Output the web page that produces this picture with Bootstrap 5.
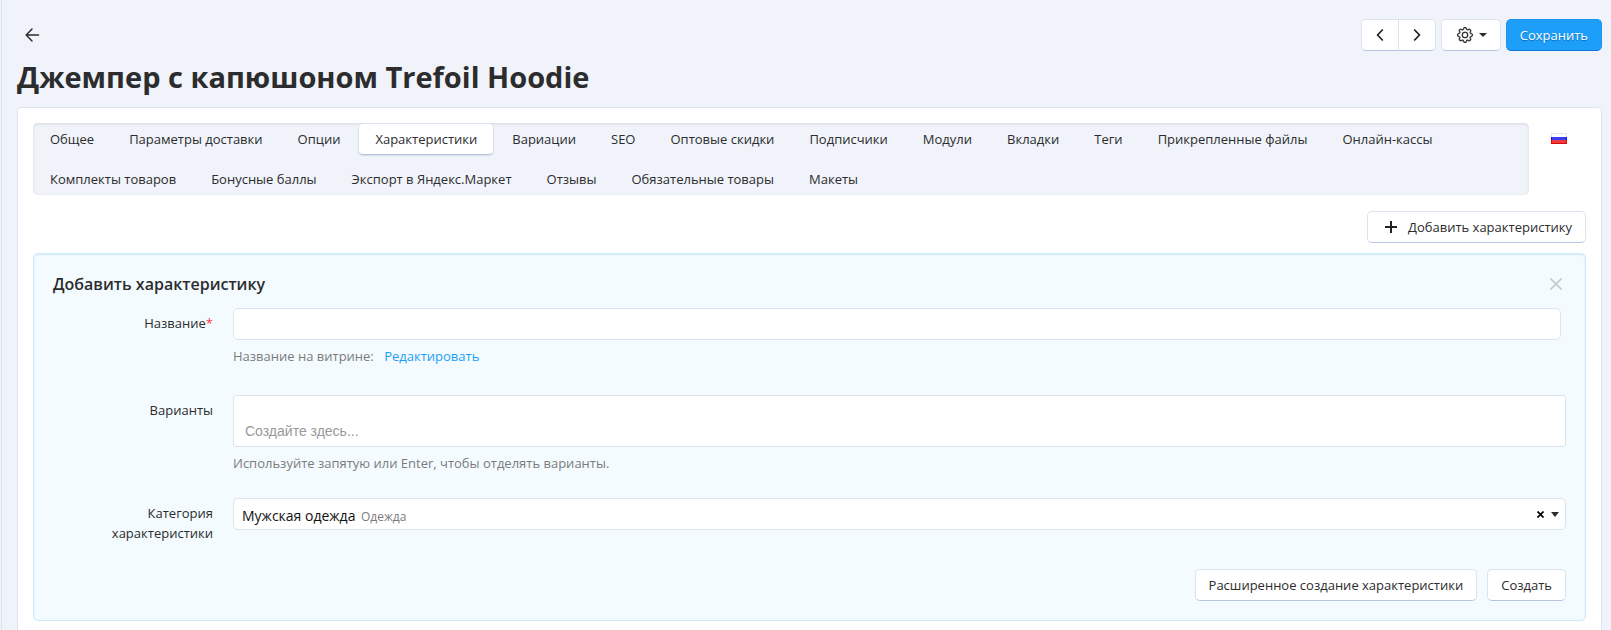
<!DOCTYPE html>
<html lang="ru">
<head>
<meta charset="utf-8">
<meta name="viewport" content="width=device-width, initial-scale=1">
<title>Джемпер с капюшоном Trefoil Hoodie</title>
<link href="https://cdn.jsdelivr.net/npm/bootstrap@5.3.0/dist/css/bootstrap.min.css" rel="stylesheet">
<style>
  :root { --line: #dbe3f0; --line-deep: #b4c3de; --ink: #2c2c2e; --page: #f0f3f9; --accent: #1d9ff9; }
  body { font-family: "Open Sans", "Noto Sans", sans-serif; font-size: 13px; line-height: 20px; color: var(--ink); background: var(--page); }
  .page-wrap { margin-left: 1px; border-left: 1px solid #dbe5f1; padding: 19px 9px 0 15px; }
  .page-title { font-size: 29px; line-height: 36px; font-weight: 700; margin: 8px 0 12px; }
  .toolbar { gap: 5px; }
  .btn { --bs-btn-font-size: 13px; --bs-btn-line-height: 20px; --bs-btn-padding-y: 5px; --bs-btn-padding-x: 13px; --bs-btn-border-radius: 5px; white-space: nowrap; }
  .btn-plain { --bs-btn-bg: #fff; --bs-btn-color: var(--ink); --bs-btn-border-color: var(--line); --bs-btn-hover-bg: #f7f9fc; --bs-btn-hover-border-color: var(--line-deep); border-bottom-color: var(--line-deep); }
  .btn-save { --bs-btn-bg: var(--accent); --bs-btn-color: #fff; --bs-btn-border-color: #1d93f0; --bs-btn-hover-bg: #1390ea; --bs-btn-hover-color: #fff; border-bottom-color: #0e76d8; text-shadow: 0 1px 1px #0b6cb8; }
  .btn-nav { --bs-btn-padding-x: 10px; width: 38px; }
  .btn-gear { gap: 5px; padding-left: 15px; padding-right: 12px; }
  .btn svg, .back svg { display: block; }
  .back { padding-left: 7px; }
  .sheet { background: #fff; border: 1px solid var(--line); border-bottom: 0; border-radius: 5px 5px 0 0; padding: 15px 15px 8px; min-height: calc(100vh - 107px); }
  .tabs { background: var(--page); border-radius: 5px; box-shadow: inset 0 1px 3px #d3d9de; gap: 8px 1px; }
  .tabs .nav-link { color: var(--ink); padding: 5px 16px; border: 1px solid transparent; border-radius: 5px; }
  .tabs .nav-link.active { color: var(--ink); background: #fff; border-color: var(--line); border-bottom-color: var(--line-deep); box-shadow: 0 1px 1px #d5deed; }
  .lang { width: 57px; padding: 10px 14px 0 22px; }
  .add-row { margin: 16px 0 10px; }
  .plus { margin-right: 7px; }
  .panel { background: #f3fbff; border: 1px solid #cdeafc; border-radius: 5px; box-shadow: inset 0 1px 2px #d4e9f6; padding: 18px 19px 19px; }
  .panel h2 { font-size: 16px; line-height: 24px; font-weight: 600; margin: 0; }
  .close-x { width: 12px; height: 12px; margin-right: 4px; }
  .field { display: grid; grid-template-columns: 160px minmax(0, 1fr); column-gap: 20px; }
  .field > label { text-align: right; padding-top: 5px; }
  .req { color: #f8384c; }
  .hint { color: #7b7b7d; margin-top: 6px; }
  .hint a { color: var(--accent); text-decoration: none; margin-left: 7px; }
  .form-control { font-size: 13px; line-height: 20px; border-color: var(--line); border-radius: 5px; padding: 5px 11px; }
  .name-row { padding-right: 5px; }
  .variants-row { margin-top: 29px; }
  .category-row { margin-top: 25px; }
  .actions { gap: 10px; margin-top: 26px; }
  textarea.form-control { font-family: "Liberation Sans", Arial, sans-serif; font-size: 14px; height: 52px; padding: 25px 11px 5px; border-radius: 3px; resize: none; overflow: hidden; display: block; }
  textarea.form-control::placeholder { color: #999; }
  .picker { background: #fff; border: 1px solid var(--line); border-radius: 5px; height: 32px; padding: 0 6px 0 8px; }
  .picker select { appearance: none; border: 0; background: none; color: #111; padding: 0; margin-right: 5px; font: inherit; font-size: 14px; }
  .picker small { font-size: 12px; color: #7b7b7d; }
  .picker-text { padding-top: 5px; }
  .picker-clear { margin-right: 7px; }
  .picker svg { display: block; }
</style>
</head>
<body>
<main class="page-wrap">
  <header>
    <div class="d-flex justify-content-between align-items-center">
      <a href="#" class="back" aria-label="Назад">
        <svg width="16" height="16" viewBox="0 0 16 16" fill="none" stroke="#2c2c2e" stroke-width="1.5" stroke-linecap="round" stroke-linejoin="round"><path d="M14.500 8H2.500M8 2L2.200 8 8 14"/></svg>
      </a>
      <div class="d-flex toolbar">
        <div class="btn-group">
          <button type="button" class="btn btn-plain btn-nav" aria-label="Предыдущий"><svg width="16" height="16" viewBox="0 0 16 16" fill="none" stroke="#222" stroke-width="1.7"><path d="M10.800 2.500L5.600 8l5.200 5.500"/></svg></button>
          <button type="button" class="btn btn-plain btn-nav" aria-label="Следующий"><svg width="16" height="16" viewBox="0 0 16 16" fill="none" stroke="#222" stroke-width="1.7"><path d="M5.200 2.500L10.400 8l-5.200 5.500"/></svg></button>
        </div>
        <button type="button" class="btn btn-plain btn-gear d-flex align-items-center" aria-label="Настройки">
          <svg width="16" height="16" viewBox="0 0 16 16" fill="#2c2c2e" stroke="#2c2c2e" stroke-width=".3"><path d="M8 4.754a3.246 3.246 0 1 0 0 6.492 3.246 3.246 0 0 0 0-6.492zM5.754 8a2.246 2.246 0 1 1 4.492 0 2.246 2.246 0 0 1-4.492 0z"/><path d="M9.796 1.343c-.527-1.790-3.065-1.790-3.592 0l-.094.319a.873.873 0 0 1-1.255.520l-.292-.160c-1.640-.892-3.433.902-2.540 2.541l.159.292a.873.873 0 0 1-.520 1.255l-.319.094c-1.790.527-1.790 3.065 0 3.592l.319.094a.873.873 0 0 1 .520 1.255l-.160.292c-.892 1.640.901 3.434 2.541 2.540l.292-.159a.873.873 0 0 1 1.255.520l.094.319c.527 1.790 3.065 1.790 3.592 0l.094-.319a.873.873 0 0 1 1.255-.520l.292.160c1.640.893 3.434-.902 2.540-2.541l-.159-.292a.873.873 0 0 1 .520-1.255l.319-.094c1.790-.527 1.790-3.065 0-3.592l-.319-.094a.873.873 0 0 1-.520-1.255l.160-.292c.893-1.640-.902-3.433-2.541-2.540l-.292.159a.873.873 0 0 1-1.255-.520l-.094-.319zm-2.633.283c.246-.835 1.428-.835 1.674 0l.094.319a1.873 1.873 0 0 0 2.693 1.115l.291-.160c.764-.415 1.600.420 1.184 1.185l-.159.292a1.873 1.873 0 0 0 1.116 2.692l.318.094c.835.246.835 1.428 0 1.674l-.319.094a1.873 1.873 0 0 0-1.115 2.693l.160.291c.415.764-.420 1.600-1.185 1.184l-.291-.159a1.873 1.873 0 0 0-2.693 1.116l-.094.318c-.246.835-1.428.835-1.674 0l-.094-.319a1.873 1.873 0 0 0-2.692-1.115l-.292.160c-.764.415-1.600-.420-1.184-1.185l.159-.291A1.873 1.873 0 0 0 1.945 8.930l-.319-.094c-.835-.246-.835-1.428 0-1.674l.319-.094A1.873 1.873 0 0 0 3.060 4.377l-.160-.292c-.415-.764.420-1.600 1.185-1.184l.292.159a1.873 1.873 0 0 0 2.692-1.115l.094-.319z"/></svg>
          <svg width="10" height="6" viewBox="0 0 10 6"><path d="M1 1h8L5 5z" fill="#2c2c2e"/></svg>
        </button>
        <button type="button" class="btn btn-save">Сохранить</button>
      </div>
    </div>
    <h1 class="page-title">Джемпер с капюшоном Trefoil Hoodie</h1>
  </header>

  <section class="sheet">
    <div class="d-flex align-items-start">
      <ul class="nav nav-pills tabs flex-grow-1">
        <li class="nav-item"><a class="nav-link" href="#">Общее</a></li>
        <li class="nav-item"><a class="nav-link" href="#">Параметры доставки</a></li>
        <li class="nav-item"><a class="nav-link" href="#">Опции</a></li>
        <li class="nav-item"><a class="nav-link active" aria-current="page" href="#">Характеристики</a></li>
        <li class="nav-item"><a class="nav-link" href="#">Вариации</a></li>
        <li class="nav-item"><a class="nav-link" href="#">SEO</a></li>
        <li class="nav-item"><a class="nav-link" href="#">Оптовые скидки</a></li>
        <li class="nav-item"><a class="nav-link" href="#">Подписчики</a></li>
        <li class="nav-item"><a class="nav-link" href="#">Модули</a></li>
        <li class="nav-item"><a class="nav-link" href="#">Вкладки</a></li>
        <li class="nav-item"><a class="nav-link" href="#">Теги</a></li>
        <li class="nav-item"><a class="nav-link" href="#">Прикрепленные файлы</a></li>
        <li class="nav-item"><a class="nav-link" href="#">Онлайн-кассы</a></li>
        <li class="nav-item"><a class="nav-link" href="#">Комплекты товаров</a></li>
        <li class="nav-item"><a class="nav-link" href="#">Бонусные баллы</a></li>
        <li class="nav-item"><a class="nav-link" href="#">Экспорт в Яндекс.Маркет</a></li>
        <li class="nav-item"><a class="nav-link" href="#">Отзывы</a></li>
        <li class="nav-item"><a class="nav-link" href="#">Обязательные товары</a></li>
        <li class="nav-item"><a class="nav-link" href="#">Макеты</a></li>
      </ul>
      <a href="#" class="lang flex-shrink-0" aria-label="Русский">
        <svg class="d-block" width="16" height="11" viewBox="0 0 16 11"><path d="M0 0h16v4H0z" fill="#e6e6e6"/><path d="M1 1h14v3H1z" fill="#fcfcfc"/><path d="M0 4h16v3H0z" fill="#1414e0"/><path d="M1 4h14v3H1z" fill="#3c3cf4"/><path d="M0 7h16v4H0z" fill="#dc0408"/><path d="M1 7h14v3H1z" fill="#f03a3c"/></svg>
      </a>
    </div>

    <div class="d-flex justify-content-end add-row">
      <button type="button" class="btn btn-plain d-flex align-items-center"><svg class="plus" width="20" height="14" viewBox="0 0 20 14" stroke="#222" stroke-width="2"><path d="M4 7h12M10 1v12"/></svg>Добавить характеристику</button>
    </div>

    <form class="panel">
      <div class="d-flex justify-content-between align-items-center">
        <h2>Добавить характеристику</h2>
        <button type="button" class="close-x border-0 bg-transparent p-0" aria-label="Закрыть"><svg class="d-block" width="12" height="12" viewBox="0 0 12 12" stroke="#c3c8cb" stroke-width="1.6"><path d="M.5.5l11 11M11.500.5l-11 11"/></svg></button>
      </div>
      <div class="field name-row mt-2 pt-1">
        <label for="f-name">Название<span class="req">*</span></label>
        <div>
          <input id="f-name" class="form-control" type="text">
          <div class="hint">Название на витрине: <a href="#">Редактировать</a></div>
        </div>
      </div>
      <div class="field variants-row">
        <label for="f-variants">Варианты</label>
        <div>
          <textarea id="f-variants" class="form-control" placeholder="Создайте здесь..."></textarea>
          <div class="hint">Используйте запятую или Enter, чтобы отделять варианты.</div>
        </div>
      </div>
      <div class="field category-row">
        <label for="f-category">Категория характеристики</label>
        <div class="picker d-flex align-items-center">
          <div class="picker-text d-flex align-items-baseline">
            <select id="f-category"><option>Мужская одежда</option></select>
            <small>Одежда</small>
          </div>
          <button type="button" class="picker-clear border-0 bg-transparent p-0 ms-auto" aria-label="Очистить"><svg width="7" height="7" viewBox="0 0 7 7" stroke="#000" stroke-width="1.7"><path d="M.5.5l6 6M6.500.5l-6 6"/></svg></button>
          <svg width="8" height="5" viewBox="0 0 8 5"><path d="M0 0h8L4 5z" fill="#2c2c2e"/></svg>
        </div>
      </div>
      <div class="d-flex justify-content-end actions">
        <button type="button" class="btn btn-plain">Расширенное создание характеристики</button>
        <button type="submit" class="btn btn-plain">Создать</button>
      </div>
    </form>
  </section>
</main>
<script src="https://cdn.jsdelivr.net/npm/bootstrap@5.3.0/dist/js/bootstrap.bundle.min.js"></script>
</body>
</html>
